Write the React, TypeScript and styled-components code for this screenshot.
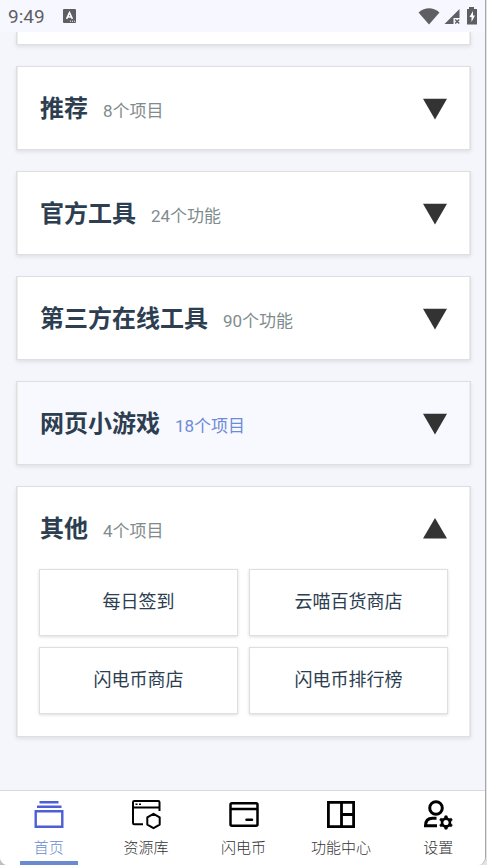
import React, { useState } from "react";
import styled, { createGlobalStyle } from "styled-components";

const GlobalStyle = createGlobalStyle`
  *, *::before, *::after { box-sizing: border-box; }
  body {
    margin: 0;
    background: #bfbfc1;
    font-family: Roboto, "Noto Sans CJK SC", sans-serif;
    color: #2c3e50;
  }
  button { font: inherit; color: inherit; }
`;

const Desktop = styled.div`
  display: flex;
  height: 100vh;
  padding-right: 1px;
  background: linear-gradient(to right, #bfbfc1 50%, #e4e4e4 50%);
`;

const Screen = styled.div`
  flex: 1;
  display: flex;
  flex-direction: column;
  overflow: hidden;
  background: #f5f6fb;
  border-right: 1px solid #a6a6aa;
  border-radius: 0 0 8px 8px;
`;

const StatusBar = styled.header`
  display: flex;
  align-items: center;
  flex: none;
  height: 32px;
  padding: 0 6px 0 8px;
  background: #f7f7ff;
  color: #5f5f63;
  svg { display: block; }
`;

const Clock = styled.time`
  font-size: 19px;
  line-height: 32px;
  padding-top: 2px;
  margin-right: 18px;
`;

const StatusIcons = styled.div`
  display: flex;
  align-items: center;
  gap: 4px;
  margin-left: auto;
`;

const Content = styled.main`
  flex: 1;
  min-height: 0;
  overflow: hidden;
  display: flex;
  flex-direction: column;
  gap: 21px;
  padding: 0 14px 0 16px;
`;

const Card = styled.section<{ $active?: boolean }>`
  flex: none;
  background: ${(p) => (p.$active ? "#f8f9fe" : "#fff")};
  border: 1px solid #dedfe0;
  box-shadow: inset 1px 0 #ececec, inset -1px 0 #ececec, 0 2px 4px rgba(0, 0, 0, 0.09);
`;

const CardTail = styled(Card)`
  height: 13px;
  border-top: 0;
`;

const CardHeader = styled.button`
  display: flex;
  align-items: center;
  width: 100%;
  height: 82px;
  padding: 2px 23px 0;
  border: 0;
  background: none;
  text-align: left;
  cursor: pointer;
`;

const CardLabel = styled.span`
  flex: 1;
  display: flex;
  align-items: baseline;
  gap: 15px;
`;

const Title = styled.span`
  font-size: 24px;
  line-height: 32px;
  font-weight: 700;
`;

const Count = styled.span<{ $active?: boolean }>`
  font-size: 17px;
  line-height: 24px;
  color: ${(p) => (p.$active ? "#6d8bd6" : "#7f8c8d")};
`;

const Grid = styled.div`
  display: grid;
  grid-template-columns: 1fr 1fr;
  gap: 11px;
  padding: 0 22px 22px;
`;

const Tile = styled.button`
  height: 67px;
  padding: 0 0 2px;
  background: #fff;
  border: 1px solid #dedfe0;
  box-shadow: 0 1px 3px rgba(0, 0, 0, 0.14);
  font-size: 18px;
  line-height: 24px;
  cursor: pointer;
`;

const TabBar = styled.nav`
  flex: none;
  display: flex;
  height: 75px;
  margin-right: -2px;
  background: #fff;
  border-top: 1px solid #d9dadf;
`;

const Tab = styled.a<{ $current?: boolean }>`
  flex: 1;
  display: flex;
  flex-direction: column;
  align-items: center;
  padding-top: 8px;
  color: ${(p) => (p.$current ? "#6a8bd0" : "#333")};
  text-decoration: none;
  font-size: 15px;
  font-weight: 300;
  line-height: 20px;
  svg { display: block; color: ${(p) => (p.$current ? "#4c5fd5" : "#000")}; }
  &::after {
    content: "";
    width: 58px;
    height: 4px;
    margin-top: auto;
    background: ${(p) => (p.$current ? "#6a8bd0" : "transparent")};
  }
`;

const TabText = styled.span`
  margin-top: 7px;
`;

const Arrow = ({ open }: { open: boolean }) => (
  <svg width="24" height="22" viewBox="0 0 24 22" aria-hidden="true">
    <path d={open ? "M12 0 24 20.5H0Z" : "M0 .8H24L12 21.5Z"} fill="#333" />
  </svg>
);

const LetterBadge = () => (
  <svg width="13" height="14" viewBox="0 0 13 14" aria-hidden="true">
    <rect width="13" height="14" rx="1" fill="currentColor" />
    <path d="M3.6 9.8 6.5 3.7 9.4 9.8M4.7 8H8.3" fill="none" stroke="#fff" strokeWidth="1.6" />
    <path d="M7 12.2h1M9 12.2h1M11 12.2h1" stroke="#fff" />
  </svg>
);

const Wifi = () => (
  <svg width="22" height="17" viewBox="0 0 22 17" aria-hidden="true">
    <path d="M.5 4.5Q11-3.8 21.5 4.5L11 16.5Z" fill="currentColor" />
  </svg>
);

const Signal = () => (
  <svg width="17" height="17" viewBox="0 0 17 17" aria-hidden="true">
    <path d="M15.5 1V10H9.5V16H.5Z" fill="currentColor" />
    <path d="m11.2 11.5 4 4m0-4-4 4" stroke="currentColor" strokeWidth="1.5" />
  </svg>
);

const Battery = () => (
  <svg width="14" height="18" viewBox="0 0 14 18" aria-hidden="true">
    <path d="M4 0h5v2H12v15.500H2V2h2Z" fill="currentColor" />
    <path d="M8 4 4.500 10H6.500V15L10 8.500H8Z" fill="#fff" />
  </svg>
);

const iconProps = {
  width: 32,
  height: 32,
  viewBox: "0 0 32 32",
  fill: "none",
  stroke: "currentColor",
  "aria-hidden": true,
} as const;

const HomeIcon = () => (
  <svg {...iconProps} strokeWidth="2.4">
    <path d="M6.5 3.2h19M4 7.7h24.5" />
    <path d="M2.7 12.2H29.3V27.8H2.7Z" />
  </svg>
);

const LibraryIcon = () => (
  <svg {...iconProps} strokeWidth="2" strokeLinejoin="round">
    <path d="M29.500 12V3.300Q29.500 2 28.200 2H4.300Q3 2 3 3.300V24Q3 25.200 4.300 25.200H13M3 8.500H29.500" />
    <path d="M5.500 5.300h2M9 5.300h2" strokeWidth="1.600" />
    <path d="m23.500 14.800 6.200 3.600v7.200l-6.200 3.600-6.200-3.600v-7.200Z" />
  </svg>
);

const CoinIcon = () => (
  <svg {...iconProps} strokeWidth="2.5">
    <rect x="2.5" y="4.3" width="27" height="22.5" rx="1.5" />
    <path d="M2.5 10H29.5" />
    <path d="M18.500 20.700H24" strokeLinecap="round" />
  </svg>
);

const CenterIcon = () => (
  <svg {...iconProps} strokeWidth="2.8">
    <path d="M3.4 3.4H28.600V27.600H3.400ZM16.500 3.400V27.600M16.500 15.500H28.600" />
  </svg>
);

const teeth = [0, 60, 120, 180, 240, 300];

const SettingsIcon = () => (
  <svg {...iconProps} strokeWidth="3">
    <circle cx="14" cy="9" r="6.300" />
    <path d="M14.500 19.200H10.500Q3.500 19.200 3.500 26.800H15" />
    <circle cx="24" cy="23.500" r="3.900" strokeWidth="2.600" />
    {teeth.map((angle) => (
      <path key={angle} d="M22.200 19.500 22.900 16.800H25.100L25.800 19.500Z" fill="currentColor" strokeWidth="0.5" transform={`rotate(${angle} 24 23.5)`} />
    ))}
  </svg>
);

type Section = { title: string; count: string; active?: boolean; items?: string[] };

const sections: Section[] = [
  { title: "推荐", count: "8个项目" },
  { title: "官方工具", count: "24个功能" },
  { title: "第三方在线工具", count: "90个功能" },
  { title: "网页小游戏", count: "18个项目", active: true },
  { title: "其他", count: "4个项目", items: ["每日签到", "云喵百货商店", "闪电币商店", "闪电币排行榜"] },
];

const tabs = [
  { label: "首页", Icon: HomeIcon },
  { label: "资源库", Icon: LibraryIcon },
  { label: "闪电币", Icon: CoinIcon },
  { label: "功能中心", Icon: CenterIcon },
  { label: "设置", Icon: SettingsIcon },
];

export default function App() {
  const [openTitle, setOpenTitle] = useState("其他");
  return (
    <Desktop>
      <GlobalStyle />
      <Screen lang="zh-CN">
        <StatusBar>
          <Clock>9:49</Clock>
          <LetterBadge />
          <StatusIcons>
            <Wifi />
            <Signal />
            <Battery />
          </StatusIcons>
        </StatusBar>
        <Content>
          <CardTail />
          {sections.map(({ title, count, active, items }) => {
            const open = openTitle === title;
            return (
              <Card key={title} $active={active}>
                <CardHeader type="button" aria-expanded={open} onClick={() => setOpenTitle(open ? "" : title)}>
                  <CardLabel>
                    <Title>{title}</Title>
                    <Count $active={active}>{count}</Count>
                  </CardLabel>
                  <Arrow open={open} />
                </CardHeader>
                {open && items && (
                  <Grid>
                    {items.map((item) => (
                      <Tile type="button" key={item}>{item}</Tile>
                    ))}
                  </Grid>
                )}
              </Card>
            );
          })}
        </Content>
        <TabBar>
          {tabs.map(({ label, Icon }, i) => (
            <Tab key={label} href="#" $current={i === 0} aria-current={i === 0 ? "page" : undefined}>
              <Icon />
              <TabText>{label}</TabText>
            </Tab>
          ))}
        </TabBar>
      </Screen>
    </Desktop>
  );
}
